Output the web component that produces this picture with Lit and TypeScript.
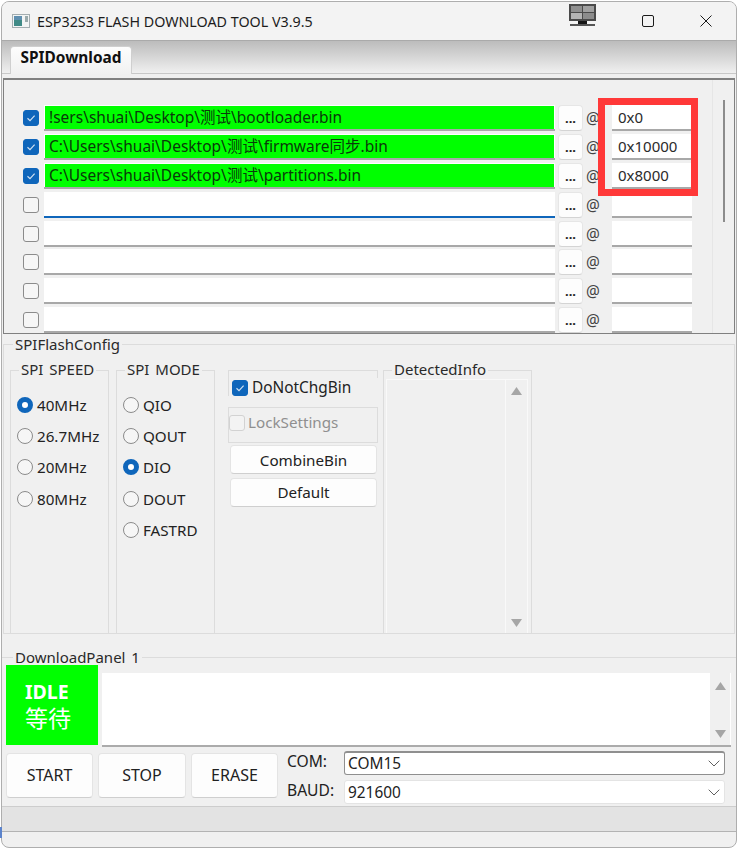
import { LitElement, html, css, svg } from "lit";
import { customElement } from "lit/decorators.js";

const FILES = [
  { path: "!sers\\shuai\\Desktop\\测试\\bootloader.bin", addr: "0x0" },
  { path: "C:\\Users\\shuai\\Desktop\\测试\\firmware同步.bin", addr: "0x10000" },
  { path: "C:\\Users\\shuai\\Desktop\\测试\\partitions.bin", addr: "0x8000" },
  { path: "", addr: "", focus: true },
  { path: "", addr: "" },
  { path: "", addr: "" },
  { path: "", addr: "" },
  { path: "", addr: "" },
];
const SPEEDS = [["40MHz", true], ["26.7MHz", false], ["20MHz", false], ["80MHz", false]] as const;
const MODES = [["QIO", false], ["QOUT", false], ["DIO", true], ["DOUT", false], ["FASTRD", false]] as const;

const check = svg`<svg width="10" height="10" viewBox="0 0 10 10"><path d="M1.5 5.2 L4 7.6 L8.6 2.6" fill="none" stroke="#cfe0f2" stroke-width="1.2"/></svg>`;
const up = svg`<svg width="11" height="8" viewBox="0 0 11 8"><path d="M5.5 0 L11 8 L0 8 Z" fill="#a6a6a6"/></svg>`;
const down = svg`<svg width="11" height="8" viewBox="0 0 11 8"><path d="M0 0 L11 0 L5.5 8 Z" fill="#a6a6a6"/></svg>`;
const chevron = svg`<svg width="12" height="7" viewBox="0 0 12 7"><path d="M0.7 0.7 L6 6 L11.3 0.7" fill="none" stroke="#606060" stroke-width="1"/></svg>`;

@customElement("app-root")
export class AppRoot extends LitElement {
  static styles = css`
    :host { display: block; position: relative; width: 737px; height: 848px; background: #fff; overflow: hidden;
      font-family: "Noto Sans", "Noto Sans CJK SC", sans-serif; font-size: 14px; color: #222; }
    :host::before { content: ""; position: absolute; left: 0; top: 827px; width: 2px; height: 11px; background: #5c84cc; }
    * { box-sizing: border-box; }
    .window { margin: 1px 0 0 1px; width: 736px; height: 847px; border: 1px solid #aeaeae; border-radius: 8px;
      background: #f0f0f0; overflow: hidden; display: flex; flex-direction: column; }
    .title { height: 38px; flex: none; display: flex; align-items: center; background: #f3f3f3; padding-left: 10px; }
    .title-name { margin-left: 7px; font-size: 14.3px; color: #1c1c1c; white-space: nowrap; flex: none; width: 280px; }
    .title-ctl { margin-left: 252px; display: flex; align-items: flex-start; height: 38px; }
    .mon { margin-top: 2px; }
    .max { margin: 13px 0 0 46px; }
    .close { margin: 13px 0 0 46px; }
    .tabs { flex: none; height: 38px; border-top: 1px solid #aaa; }
    .tabstrip { height: 33px; padding: 5px 0 0 8px; background: linear-gradient(#bcbcbc, #f0f0f0); border-bottom: 1px solid #c8c8c8; }
    .tab { width: 122px; height: 28px; border: 1px solid #cfcfcf; border-bottom: none; border-radius: 4px 4px 0 0;
      background: linear-gradient(#fdfdfd, #f1f1f1); font-weight: 700; font-size: 15.4px; line-height: 22px; text-align: center; color: #111; }
    .files { position: relative; flex: none; height: 256px; margin: 0 1px; border: 1px solid #808080; border-top-width: 2px;
      display: flex; overflow: hidden; background: #f0f0f0; }
    .rows { width: 708px; flex: none; padding: 24px 0 0 19px; }
    .row { height: 28.8px; display: flex; align-items: center; }
    .cb { flex: none; width: 16px; height: 16px; border-radius: 3px; border: 1px solid #8b8b8b; background: #f6f6f6;
      display: flex; align-items: center; justify-content: center; }
    .cb.on { background: #0f66bb; border-color: #0f66bb; }
    .cb.dim { border-color: #d2d2d2; background: #f3f3f3; }
    .field { flex: none; margin-left: 5px; width: 511px; height: 26px; padding: 1px 1px 0; background: #fff; border-bottom: 2px solid #a8a8a8; overflow: hidden; }
    .field.focus { border-bottom-color: #0f66bb; }
    .fill { height: 100%; padding-left: 4px; font-size: 15.5px; line-height: 23px; white-space: nowrap; }
    .fill.on { background: #00ff00; color: #0a3a0a; }
    .dots { flex: none; margin-left: 3px; width: 25px; height: 26px; border: 1px solid #e6e6e6; border-bottom-color: #d4d4d4; border-radius: 4px;
      background: #fdfdfd; text-align: center; font-size: 13px; line-height: 25px; color: #222; font-weight: 700; }
    .at { flex: none; width: 29px; padding: 1px 0 0 3px; font-size: 15.4px; color: #444; }
    .addr { flex: none; width: 80px; height: 26px; padding-left: 6px; background: #fff; border-bottom: 2px solid #a8a8a8; font-size: 15px; line-height: 25px; color: #2a2a2a; }
    .vbar { flex: 1; border-left: 1px solid #e6e6e6; padding: 20px 0 0 10px; }
    .thumb { width: 2px; height: 122px; background: #8c8c8c; }
    .red { position: absolute; left: 594px; top: 18px; width: 100px; height: 98px; border: 7px solid #ff3838; pointer-events: none; }
    fieldset { margin: 0; padding: 0; min-width: 0; border: 1px solid #dcdcdc; }
    legend { padding: 0 2px; font-size: 15px; line-height: 20px; color: #2a2a2a; white-space: nowrap; word-spacing: 2px; }
    .config { flex: none; height: 300px; margin: 0 1px; padding: 6px 0 0 6px; border-bottom-color: #dcdcdc; }
    .config > legend { margin-left: 9px; }
    .config > .lg { margin-left: 3px; }
    .groups { display: flex; align-items: stretch; height: 273px; }
    .group { height: 273px; flex: none; border-bottom: none; width: 99px; }
    .group > legend { margin-left: 8px; line-height: 18px; padding-bottom: 2px; }
    .mode { margin-left: 7px; }
    .radios { padding: 15px 0 0 6px; display: flex; flex-direction: column; gap: 11.2px; }
    .radio { display: flex; align-items: center; height: 20px; gap: 4px; font-size: 15.2px; white-space: nowrap; }
    .dot { flex: none; width: 16px; height: 16px; border-radius: 50%; border: 1px solid #8b8b8b; background: #f6f6f6; }
    .dot.on { border: 5px solid #0f66bb; background: #fff; }
    .mid { flex: none; width: 150px; margin: 10px 0 0 13px; display: flex; flex-direction: column; }
    .opt1 { position: relative; height: 37px; padding: 9px 0 0 4px; border-top: 1px solid #dcdcdc; display: flex; align-items: flex-start; gap: 4px; font-size: 15.4px; line-height: 16px; }
    .opt1::before { content: ""; position: absolute; left: 0; top: 0; width: 1px; height: 25px; background: #dcdcdc; }
    .opt1::after { content: ""; position: absolute; right: 0; top: 0; width: 1px; height: 7px; background: #dcdcdc; }
    .opt2 { height: 36px; padding-top: 7px; border: 1px solid #dcdcdc; display: flex; align-items: flex-start; gap: 3px; color: #8f8f8f; font-size: 15.2px; line-height: 14px; }
    .btn { background: #fdfdfd; border: 1px solid #e4e4e4; border-bottom-color: #cfcfcf; border-radius: 4px; display: flex; align-items: center; justify-content: center; font-size: 15.2px; color: #222; }
    .mid .btn { margin-left: 2px; width: 147px; height: 29px; }
    .mid .b1 { margin-top: 2px; }
    .mid .b2 { margin-top: 4px; padding-bottom: 1px; }
    .info { margin-left: 5px; width: 149px; }
    .list { height: 254px; margin: -1px 3px 0 2px; border: 1px solid #f9f9f9; border-bottom: none; display: flex; justify-content: flex-end; }
    .lbar { width: 22px; border-left: 1px solid #f9f9f9; display: flex; flex-direction: column; justify-content: space-between; align-items: center; padding: 7px 0 6px; }
    .download { flex: none; margin: 13px 0 0; height: 99px; border-width: 1px 0 0 0; padding: 0; }
    .download > legend { margin-left: 11px; }
    .log { display: flex; margin: -2px 0 0 4px; }
    .idle { flex: none; width: 92px; height: 80px; background: #00ff00; color: #fff; padding: 13px 0 0 19px; font-size: 19.5px; line-height: 27px; font-weight: 700; }
    .idle div + div { font-size: 23px; font-weight: 400; }
    .logbox { flex: none; margin: 8px 0 0 4px; width: 629px; height: 74px; background: #fff; border-bottom: 2px solid #ababab; display: flex; justify-content: flex-end; }
    .logbar { width: 21px; background: #f0f0f0; border-right: 1px solid #fff; display: flex; flex-direction: column; justify-content: space-between; align-items: center; padding: 9px 0 7px; }
    .ctrl { display: flex; margin: 5px 0 0 4px; flex: none; height: 55px; }
    .ctrl .btn { width: 87px; height: 45px; margin: 2px 5px 0 0; padding-bottom: 2px; font-size: 16px; }
    .ctrl .s { width: 88px; }
    .ctrl .e { margin-right: 9px; }
    .labels { width: 57px; flex: none; font-size: 15.6px; display: flex; flex-direction: column; gap: 9px; line-height: 20px; }
    .combos { display: flex; flex-direction: column; gap: 5px; }
    .combo { width: 381px; height: 24px; padding: 0 4px 0 3px; display: flex; align-items: center; justify-content: space-between; background: #fff; border: 1px solid #e4e4e4; border-radius: 3px; font-size: 15.4px; line-height: 22px; }
    .combo.sel { border: 1px solid #8f8f8f; border-top-width: 2px; }
    .combo.plain { padding-top: 1px; }
    .status { flex: none; height: 26px; background: #e3e3e3; border-top: 1px solid #cdcdcd; border-bottom: 1px solid #b3b3b3; }
  `;

  private row(f: (typeof FILES)[number]) {
    const on = !!f.path;
    return html`<div class="row">
      <span class="cb ${on ? "on" : ""}">${on ? check : ""}</span>
      <div class="field ${f.focus ? "focus" : ""}"><div class="fill ${on ? "on" : ""}">${f.path}</div></div>
      <div class="dots">...</div>
      <span class="at">@</span>
      <div class="addr">${f.addr}</div>
    </div>`;
  }

  private radios(items: readonly (readonly [string, boolean])[]) {
    return html`<div class="radios">${items.map(([t, on]) => html`<div class="radio"><span class="dot ${on ? "on" : ""}"></span>${t}</div>`)}</div>`;
  }

  render() {
    return html`<div class="window">
      <div class="title">
        <svg width="18" height="14" viewBox="0 0 18 14">
          <rect x="0.5" y="0.5" width="17" height="13" fill="#f2f4f4" stroke="#a3adb0"/>
          <rect x="2" y="2" width="8" height="10" fill="#3f8a86"/><rect x="2" y="2" width="8" height="4" fill="#5f8fb0"/>
          <rect x="13" y="2" width="3" height="6" fill="#9aaaac"/>
        </svg>
        <span class="title-name">ESP32S3 FLASH DOWNLOAD TOOL V3.9.5</span>
        <div class="title-ctl">
          <svg class="mon" width="27" height="23" viewBox="0 0 27 23">
            <rect x="0" y="0" width="27" height="17" fill="#4a4a4a"/>
            <rect x="2" y="2" width="11" height="6" fill="#8f8f8f"/><rect x="14" y="2" width="11" height="6" fill="#a0a0a0"/>
            <rect x="2" y="9" width="11" height="6" fill="#b4b4b4"/><rect x="14" y="9" width="11" height="6" fill="#8c8c8c"/>
            <rect x="9" y="17" width="9" height="3" fill="#151515"/><rect x="1" y="20" width="25" height="2" fill="#555"/>
          </svg>
          <svg class="max" width="12" height="12" viewBox="0 0 12 12"><rect x="0.5" y="0.5" width="11" height="11" rx="1.5" fill="none" stroke="#1a1a1a"/></svg>
          <svg class="close" width="12" height="12" viewBox="0 0 12 12"><path d="M0.5 0.5 L11.5 11.5 M11.5 0.5 L0.5 11.5" stroke="#1a1a1a" stroke-width="1"/></svg>
        </div>
      </div>
      <div class="tabs"><div class="tabstrip"><div class="tab">SPIDownload</div></div></div>
      <div class="files">
        <div class="rows">${FILES.map((f) => this.row(f))}</div>
        <div class="vbar"><div class="thumb"></div></div>
        <div class="red"></div>
      </div>
      <fieldset class="config">
        <legend class="lg">SPIFlashConfig</legend>
        <div class="groups">
          <fieldset class="group"><legend>SPI SPEED</legend>${this.radios(SPEEDS)}</fieldset>
          <fieldset class="group mode"><legend>SPI MODE</legend>${this.radios(MODES)}</fieldset>
          <div class="mid">
            <div class="opt1"><span class="cb on">${check}</span>DoNotChgBin</div>
            <div class="opt2"><span class="cb dim"></span>LockSettings</div>
            <div class="btn b1">CombineBin</div>
            <div class="btn b2">Default</div>
          </div>
          <fieldset class="group info"><legend>DetectedInfo</legend>
            <div class="list"><div class="lbar">${up}${down}</div></div>
          </fieldset>
        </div>
      </fieldset>
      <fieldset class="download">
        <legend>DownloadPanel 1</legend>
        <div class="log">
          <div class="idle"><div>IDLE</div><div>等待</div></div>
          <div class="logbox"><div class="logbar">${up}${down}</div></div>
        </div>
      </fieldset>
      <div class="ctrl">
        <div class="btn">START</div><div class="btn s">STOP</div><div class="btn e">ERASE</div>
        <div class="labels"><span>COM:</span><span>BAUD:</span></div>
        <div class="combos">
          <div class="combo sel">COM15${chevron}</div>
          <div class="combo plain">921600${chevron}</div>
        </div>
      </div>
      <div class="status"></div>
    </div>`;
  }
}
